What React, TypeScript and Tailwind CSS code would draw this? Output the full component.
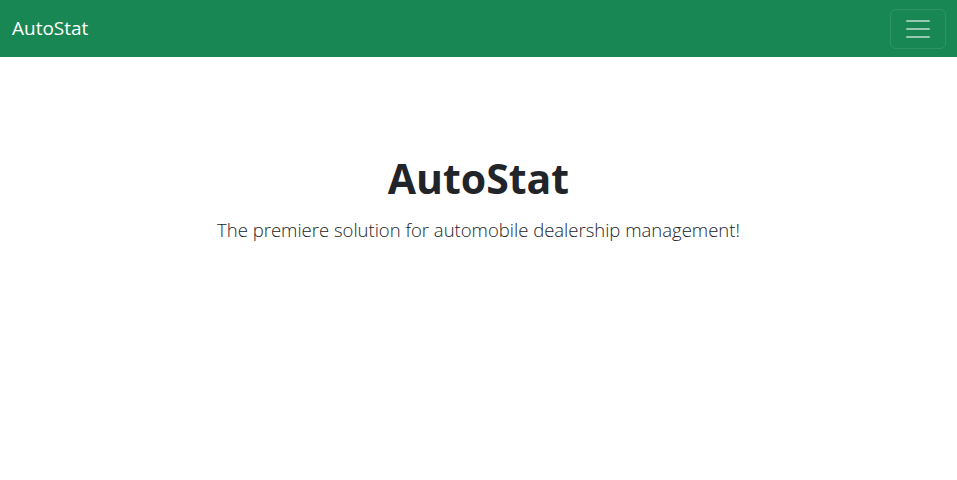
export default function App() {
  return (
    <div className="min-h-[480px] bg-white font-['Open_Sans',sans-serif] text-[#212529]">
      <nav className="flex h-[57px] items-center justify-between bg-[#198754] pl-3 pr-[11px]">
        <a className="text-[19px] text-white">AutoStat</a>
        <button
          type="button"
          className="flex h-10 w-[56px] items-center justify-center rounded-md border border-white/10"
        >
          <svg width="30" height="30" viewBox="0 0 30 30">
            <path
              stroke="rgba(255,255,255,0.55)"
              strokeLinecap="round"
              strokeMiterlimit="10"
              strokeWidth="2"
              d="M4 7h22M4 15h22M4 23h22"
            />
          </svg>
        </button>
      </nav>
      <div className="my-12 px-6 py-12 text-center">
        <h1 className="mb-3 text-[41px] font-bold leading-[1.25]">AutoStat</h1>
        <p className="text-[18.5px] font-light leading-normal">
          The premiere solution for automobile dealership management!
        </p>
      </div>
    </div>
  );
}
